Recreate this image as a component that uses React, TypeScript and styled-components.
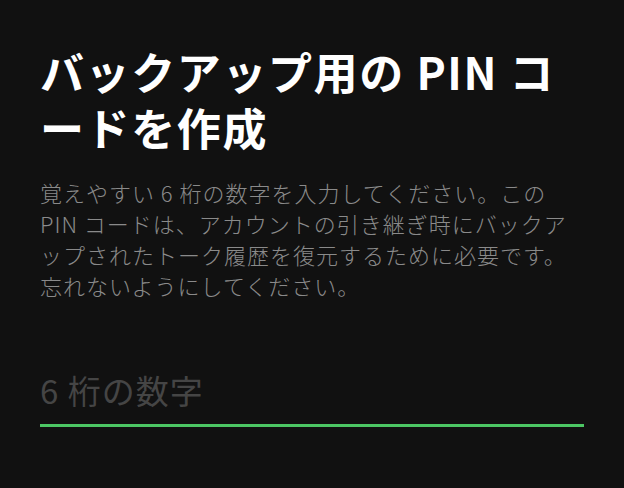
import styled, { createGlobalStyle } from "styled-components";

const GlobalStyle = createGlobalStyle`
  html, body {
    margin: 0;
    padding: 0;
    background: #111111;
  }
  body {
    font-family: "Noto Sans CJK JP", "Noto Sans", sans-serif;
  }
`;

const Page = styled.div`
  width: 624px;
  height: 488px;
  box-sizing: border-box;
  padding: 43px 40px 0 40px;
  display: flex;
  flex-direction: column;
`;

const Title = styled.h1`
  margin: 0;
  color: #ffffff;
  font-size: 44px;
  line-height: 56px;
  letter-spacing: 1.6px;
  font-weight: 700;
`;

const Description = styled.p`
  margin: 22px 0 0 0;
  color: #8a8a8a;
  font-size: 22px;
  line-height: 31px;
  letter-spacing: 1px;
  font-weight: 300;
`;

const PinField = styled.div`
  margin-top: 67px;
  display: flex;
  flex-direction: column;
`;

const PinInput = styled.input`
  background: transparent;
  border: none;
  outline: none;
  padding: 0 0 12px 0;
  margin: 0;
  font-family: "Noto Sans CJK JP", "Noto Sans", sans-serif;
  font-size: 33px;
  line-height: 44px;
  letter-spacing: 1px;
  color: #ffffff;
  border-bottom: 3px solid #4cc764;

  &::placeholder {
    color: #454545;
  }
`;

export default function App() {
  return (
    <>
      <GlobalStyle />
      <Page>
        <Title>バックアップ用の PIN コードを作成</Title>
        <Description>
          覚えやすい 6 桁の数字を入力してください。この PIN コードは、アカウントの引き継ぎ時にバックアップされたトーク履歴を復元するために必要です。忘れないようにしてください。
        </Description>
        <PinField>
          <PinInput type="tel" placeholder="6 桁の数字" />
        </PinField>
      </Page>
    </>
  );
}
